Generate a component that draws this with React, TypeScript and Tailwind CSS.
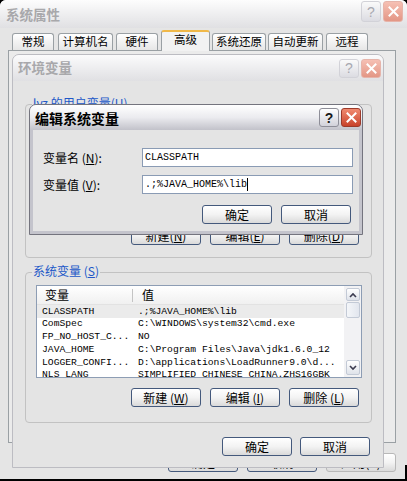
import React from "react";

const CJK = "font-['Noto_Sans_CJK_SC','Noto_Sans',sans-serif]";
const MONO = "font-['Liberation_Mono','DejaVu_Sans_Mono',monospace]";
const SANS = "font-['Liberation_Sans','Noto_Sans',sans-serif]";

function CloseX() {
  return (
    <svg width="11" height="11" viewBox="0 0 11 11">
      <path d="M1.5 1.5 L9.5 9.5 M9.5 1.5 L1.5 9.5" stroke="white" strokeWidth="2" strokeLinecap="square" />
    </svg>
  );
}

function TitleButtons({ active, big }: { active?: boolean; big?: boolean }) {
  const size = big ? "h-[21px] w-[20px]" : "h-[19px] w-[20px]";
  return (
    <div className="flex items-center gap-[2px]">
      <div
        className={`${size} ${SANS} flex items-center justify-center rounded-[3px] border text-[14px] leading-none ${
          active
            ? "border-[#8e8e98] bg-linear-to-b from-white to-[#d2d2da] font-bold text-[#1a1a1a]"
            : "border-[#d2d2d8] bg-linear-to-b from-[#fafafa] to-[#dcdce2] text-[#a8a8b0]"
        }`}
      >
        ?
      </div>
      <div
        className={`${size} flex items-center justify-center rounded-[3px] border ${
          active
            ? "border-[#9c3a2a] bg-linear-to-b from-[#f08a70] to-[#c8412a]"
            : "border-[#e6b4aa] bg-linear-to-b from-[#f6c0b4] to-[#e39685]"
        }`}
      >
        <CloseX />
      </div>
    </div>
  );
}

function Btn({ children, cls }: { children: React.ReactNode; cls?: string }) {
  return (
    <div
      className={`flex h-[19px] w-[70px] shrink-0 items-center justify-center rounded-[3px] border border-[#44597c] bg-linear-to-b from-white via-[#f3f3f3] to-[#dadada] text-[12px] leading-none text-black ${CJK} ${cls ?? ""}`}
    >
      {children}
    </div>
  );
}

function Group({ label, cls, children }: { label: React.ReactNode; cls: string; children: React.ReactNode }) {
  return (
    <div className={`relative flex shrink-0 flex-col rounded-[4px] border border-[#c2c2c2] pl-[10px] pr-[9px] pt-[12px] ${cls}`}>
      <div className={`absolute -top-[10px] left-[6px] h-[16px] whitespace-nowrap bg-[#e4e4e4] px-[1px] text-[12px] leading-[16px] text-[#2157c8] ${CJK}`}>
        {label}
      </div>
      {children}
    </div>
  );
}

function Chevron({ up }: { up?: boolean }) {
  return (
    <svg width="8" height="6" viewBox="0 0 8 6">
      <path d={up ? "M1 5 L4 2 L7 5" : "M1 1 L4 4 L7 1"} stroke="#3c3c50" strokeWidth="1.6" fill="none" />
    </svg>
  );
}

type Row = [string, string];

function VarList({ rows, cls }: { rows: Row[]; cls: string }) {
  return (
    <div className={`flex overflow-hidden border border-[#8d9db4] bg-white ${cls}`}>
      <div className="flex min-w-0 flex-1 flex-col overflow-hidden">
        <div className={`flex h-[19px] shrink-0 items-center border-b border-[#e2e2e2] bg-linear-to-b from-white to-[#f0f0f0] text-[12px] text-black ${CJK}`}>
          <div className="w-[95px] pl-[8px]">变量</div>
          <div className="h-[13px] w-px bg-[#c4c4c4]" />
          <div className="pl-[9px]">值</div>
        </div>
        {rows.map((r, i) => (
          <div
            key={i}
            className={`flex h-[12.75px] shrink-0 items-center whitespace-nowrap text-[9.7px] leading-none text-black ${MONO} ${i === 0 ? "bg-[#ebebeb]" : ""}`}
          >
            <div className="w-[95px] shrink-0 overflow-hidden pl-[5px]">{r[0]}</div>
            <div className="pl-[6px]">{r[1]}</div>
          </div>
        ))}
      </div>
      <div className="flex w-[17px] shrink-0 flex-col items-center gap-[1px] bg-[#f2f2f4] px-[1px] py-[2px]">
        <div className="flex h-[13px] w-[14px] items-center justify-center rounded-[2px] border border-[#c3cad6] bg-linear-to-b from-white to-[#dfe3ea]">
          <Chevron up />
        </div>
        <div className="h-[16px] w-[14px] rounded-[2px] border border-[#c3cad6] bg-linear-to-r from-[#f4f6f9] to-[#e2e6ee]" />
        <div className="flex-1" />
        <div className="flex h-[15px] w-[14px] items-center justify-center rounded-[2px] border border-[#c3cad6] bg-linear-to-b from-white to-[#dfe3ea]">
          <Chevron />
        </div>
      </div>
    </div>
  );
}

const sysRows: Row[] = [
  ["CLASSPATH", ".;%JAVA_HOME%\\lib"],
  ["ComSpec", "C:\\WINDOWS\\system32\\cmd.exe"],
  ["FP_NO_HOST_C...", "NO"],
  ["JAVA_HOME", "C:\\Program Files\\Java\\jdk1.6.0_12"],
  ["LOGGER_CONFI...", "D:\\applications\\LoadRunner9.0\\d..."],
  ["NLS_LANG", "SIMPLIFIED CHINESE_CHINA.ZHS16GBK"],
];

const userRows: Row[] = [
  ["PATH", "%JAVA_HOME%\\bin"],
  ["TEMP", "C:\\Documents and Settings\\..."],
  ["TMP", "C:\\Documents and Settings\\..."],
];

const tabs: { t: string; cls: string; sel?: boolean }[] = [
  { t: "常规", cls: "ml-[4px] w-[42px]" },
  { t: "计算机名", cls: "ml-[4px] w-[55px]" },
  { t: "硬件", cls: "ml-[3px] w-[42px]" },
  { t: "高级", cls: "ml-[3px] w-[49px]", sel: true },
  { t: "系统还原", cls: "ml-[2px] w-[54px]" },
  { t: "自动更新", cls: "ml-[2px] w-[55px]" },
  { t: "远程", cls: "ml-[3px] w-[42px]" },
];

export default function App() {
  return (
    <div className={`relative h-[481px] w-[407px] overflow-hidden bg-black ${CJK}`}>
      {/* 系统属性 (outer, inactive) */}
      <div className="absolute left-0 top-0 flex h-[479px] w-[407px] flex-col rounded-t-[6px] bg-[#e5e5e5]">
        <div className="flex h-[28px] shrink-0 items-start justify-between rounded-t-[6px] bg-linear-to-b from-[#fdfdfd] to-[#e0e0e3] pl-[6px] pr-[4px] pt-[1px]">
          <span className="mt-[4px] text-[13.5px] font-bold leading-[18px] text-[#a8a8ab]">系统属性</span>
          <TitleButtons big />
        </div>
        <div className="flex flex-1 flex-col pl-[8px] pr-[11px]">
          <div className="mt-[4px] flex h-[18px] shrink-0 items-end">
            {tabs.map((tb) => (
              <div
                key={tb.t}
                className={`flex shrink-0 items-center justify-center rounded-t-[3px] border border-b-0 text-[11.5px] leading-none text-black ${tb.cls} ${
                  tb.sel
                    ? "relative z-10 -mb-[1px] h-[21px] border-[#9aa0a4] border-t-2 border-t-[#f0b848] bg-[#f2f2f2] pb-[3px]"
                    : "h-[17px] border-[#9aa0a4] bg-linear-to-b from-white to-[#e6e6e6]"
                }`}
              >
                {tb.t}
              </div>
            ))}
          </div>
          <div className="h-[393px] shrink-0 border border-[#9aa0a4] bg-[#ebebeb]" />
          <div className="mt-[10px] flex justify-end gap-[9px]">
            <Btn>确定</Btn>
            <Btn>取消</Btn>
            <Btn cls="border-[#b8b8b8] text-[#a0a0a0]">应用(A)</Btn>
          </div>
        </div>
      </div>

      {/* 环境变量 (inactive) */}
      <div className="absolute left-[12px] top-[54px] flex h-[414px] w-[372px] flex-col overflow-hidden rounded-t-[7px] border border-[#bcbcc2] bg-[#e4e4e4]">
        <div className="flex h-[26px] shrink-0 items-center justify-between bg-linear-to-b from-[#fbfbfc] to-[#e0e0e3] pl-[5px] pr-[2px]">
          <span className="text-[13.5px] font-bold leading-none text-[#a8a8ab]">环境变量</span>
          <TitleButtons />
        </div>
        <div className="flex flex-1 flex-col pl-[12px] pr-[11px] pt-[23px]">
          <Group
            cls="h-[154px]"
            label={
              <>
                lyz 的用户变量(<span className="underline">U</span>)
              </>
            }
          >
            <VarList rows={userRows} cls="h-[99px]" />
            <div className="mt-[10px] flex justify-end gap-[9px] pr-[3px]">
              <Btn>新建(<span className="underline">N</span>)</Btn>
              <Btn>编辑(<span className="underline">E</span>)</Btn>
              <Btn>删除(<span className="underline">D</span>)</Btn>
            </div>
          </Group>
          <Group
            cls="mt-[14px] h-[151px]"
            label={
              <>
                系统变量 (<span className="underline">S</span>)
              </>
            }
          >
            <VarList rows={sysRows} cls="h-[93px]" />
            <div className="mt-[10px] flex justify-end gap-[9px] pr-[3px]">
              <Btn>新建 (<span className="underline">W</span>)</Btn>
              <Btn>编辑 (<span className="underline">I</span>)</Btn>
              <Btn>删除 (<span className="underline">L</span>)</Btn>
            </div>
          </Group>
          <div className="mt-[14px] flex justify-end gap-[8px] pr-[2px]">
            <Btn>确定</Btn>
            <Btn>取消</Btn>
          </div>
        </div>
      </div>

      {/* 编辑系统变量 (active) */}
      <div className="absolute left-[29px] top-[104px] flex h-[131px] w-[334px] flex-col overflow-hidden rounded-t-[7px] border border-[#74747e] bg-[#c4c4cc]">
        <div className="flex h-[25px] shrink-0 items-center justify-between bg-linear-to-b from-white via-[#ebebef] to-[#c2c2ca] pl-[5px] pr-[1px]">
          <span className="text-[14px] font-bold leading-none text-black">编辑系统变量</span>
          <TitleButtons active />
        </div>
        <div className="mx-[3px] mb-[3px] flex flex-1 flex-col bg-[#e4e4e4] pl-[10px] pr-[6px] pt-[18px]">
          <div className="flex h-[19px] items-center">
            <div className="w-[99px] shrink-0 text-[12px] text-black">
              变量名 (<span className="underline">N</span>):
            </div>
            <div className={`flex h-[19px] flex-1 items-center border border-[#8a9bb4] bg-white pl-[2px] text-[10px] text-black ${MONO}`}>
              CLASSPATH
            </div>
          </div>
          <div className="mt-[8px] flex h-[19px] items-center">
            <div className="w-[99px] shrink-0 text-[12px] text-black">
              变量值 (<span className="underline">V</span>):
            </div>
            <div className={`flex h-[19px] flex-1 items-center border border-[#8a9bb4] bg-white pl-[2px] text-[10px] text-black ${MONO}`}>
              <span>.;%JAVA_HOME%\lib</span>
              <span className="h-[13px] w-px bg-black" />
            </div>
          </div>
          <div className="mt-[11px] flex justify-end gap-[9px] pr-[2px]">
            <Btn>确定</Btn>
            <Btn>取消</Btn>
          </div>
        </div>
      </div>

      <div className="absolute right-0 top-[465px] h-[16px] w-[2px] bg-black" />
    </div>
  );
}
